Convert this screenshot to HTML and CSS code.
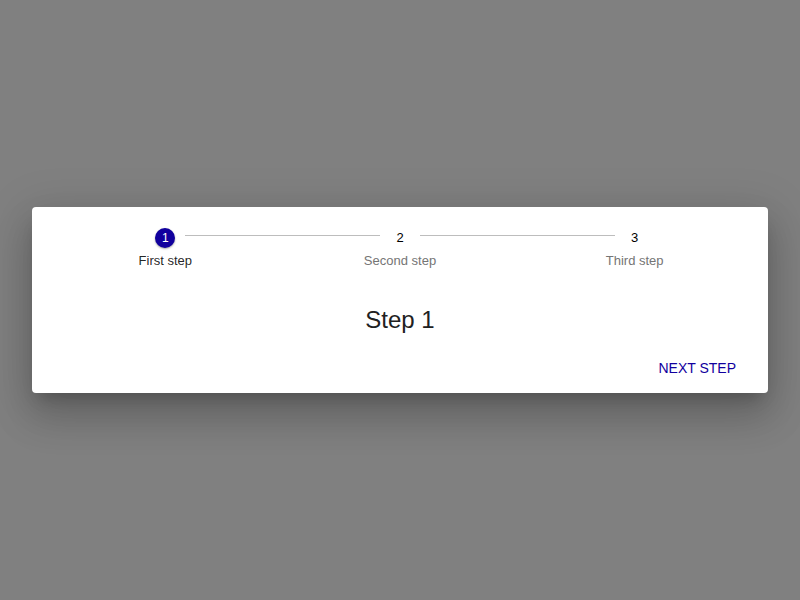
FILE: index.html
```html
<!DOCTYPE html>
<html>
<head>
<meta charset="utf-8">
<link rel="stylesheet" href="styles.css">
</head>
<body>
<div class="backdrop">
  <div class="dialog">
    <div class="stepper">
      <div class="step-icons">
        <span></span>
        <div class="icon active">1</div>
        <div class="line"></div>
        <div class="icon">2</div>
        <div class="line"></div>
        <div class="icon">3</div>
        <span></span>
      </div>
      <div class="step-labels">
        <div class="label active">First step</div>
        <div class="label">Second step</div>
        <div class="label">Third step</div>
      </div>
    </div>
    <div class="title">Step 1</div>
    <div class="actions">
      <button class="btn">NEXT STEP</button>
    </div>
  </div>
</div>
</body>
</html>
```

FILE: styles.css
```css
html, body {
  margin: 0;
  height: 100%;
}
body {
  background: #808080;
  font-family: "Liberation Sans", Arial, sans-serif;
}
.backdrop {
  height: 100%;
  display: flex;
  align-items: center;
  justify-content: center;
  padding: 0 32px;
  box-sizing: border-box;
}
.dialog {
  flex: 1;
  background: #fff;
  border-radius: 4px;
  box-shadow: 0 11px 15px -7px rgba(0,0,0,.2), 0 24px 38px 3px rgba(0,0,0,.14), 0 9px 46px 8px rgba(0,0,0,.12);
  display: flex;
  flex-direction: column;
  padding: 19px 0 15px;
}
.stepper {
  padding: 0 16px;
}
.step-icons {
  display: grid;
  grid-template-columns: 1fr 40px 2fr 40px 2fr 40px 1fr;
  height: 24px;
}
.icon {
  justify-self: center;
  align-self: center;
  width: 20px;
  height: 20px;
  line-height: 20px;
  text-align: center;
  font-size: 13px;
  color: #000;
  margin-top: 0;
}
.icon.active {
  background: #11009e;
  color: #fff;
  border-radius: 50%;
  font-size: 12px;
  box-shadow: 0 1px 2px rgba(0,0,0,.35);
}
.line {
  margin-top: 9px;
  height: 1px;
  background: #bdbdbd;
}
.step-labels {
  display: grid;
  grid-template-columns: repeat(3, 1fr);
  margin-top: 3px;
}
.label {
  text-align: center;
  font-size: 13px;
  line-height: 16px;
  color: #757575;
}
.label.active {
  color: rgba(0,0,0,.87);
}
.title {
  margin-top: 37px;
  text-align: center;
  font-size: 24px;
  line-height: 28px;
  color: #212121;
}
.actions {
  margin-top: 24px;
  display: flex;
  justify-content: flex-end;
  padding-right: 32px;
}
.btn {
  border: none;
  background: none;
  padding: 0;
  font-family: inherit;
  font-size: 14px;
  line-height: 20px;
  color: #11009e;
  cursor: pointer;
}
```
